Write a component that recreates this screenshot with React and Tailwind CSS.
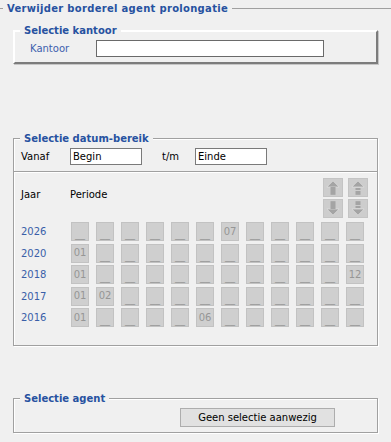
const ROWS = [
  { year: "2026", cells: { 7: "07" } },
  { year: "2020", cells: { 1: "01" } },
  { year: "2018", cells: { 1: "01", 12: "12" } },
  { year: "2017", cells: { 1: "01", 2: "02" } },
  { year: "2016", cells: { 1: "01", 6: "06" } },
];

const MONTHS = [1, 2, 3, 4, 5, 6, 7, 8, 9, 10, 11, 12];

const Legend = ({ children, className = "" }) => (
  <legend
    className={`px-[4px] leading-[13px] font-bold text-[#2752a0] bg-[#f0f0f0] ${className}`}
  >
    {children}
  </legend>
);

const Cell = ({ value }) => (
  <div className="w-[18px] h-[19px] bg-[#cfcfcf] border border-[#c2c2c2] flex items-center justify-center text-[#969696] leading-none">
    {value ?? <span className="mt-[5px]">__</span>}
  </div>
);

// grey paging arrows, disabled look
const ArrowBtn = ({ dir, split }) => (
  <div className="w-[20px] h-[19px] bg-[#cdcdcd] border border-[#c4c4c4] flex items-center justify-center">
    <svg width="14" height="15" viewBox="0 0 14 15" className={dir === "down" ? "rotate-180" : ""}>
      <path d="M7 0.8 L13.2 7 L0.8 7 Z" fill="#a4a4a4" stroke="#e2e2e2" strokeWidth="0.7" strokeLinejoin="round" />
      {split ? (
        <>
          <rect x="4.5" y="8" width="5" height="2" fill="#a4a4a4" />
          <rect x="4.5" y="11" width="5" height="3.8" fill="#a4a4a4" />
        </>
      ) : (
        <rect x="4.5" y="7" width="5" height="7.8" fill="#a4a4a4" />
      )}
    </svg>
  </div>
);

const etched = "border border-[#a0a0a0] shadow-[inset_1px_1px_0_#fff,1px_1px_0_#fff]";

export default function App() {
  return (
    <div className="w-[391px] h-[442px] overflow-hidden bg-[#f0f0f0] text-[10px] text-black font-['DejaVu_Sans',Verdana,sans-serif]">
      <fieldset className="mt-[2px] border-t border-[#a0a0a0] min-w-0">
        <Legend className="ml-[3px] tracking-[0.3px]">Verwijder borderel agent prolongatie</Legend>

        {/* kantoor */}
        <fieldset className="mt-[9px] mx-[13px] border-2 border-t-white border-l-white border-r-[#7c7c7c] border-b-[#7c7c7c] shadow-[1px_1px_0_#c6c6c6] pt-[3px] pb-[5px] min-w-0">
          <Legend className="ml-[5px]">Selectie kantoor</Legend>
          <div className="flex items-center pl-[15px]">
            <span className="w-[66px] text-[#3d5fae]">Kantoor</span>
            <div className="w-[228px] h-[17px] bg-white border border-[#6a6a6a]" />
          </div>
        </fieldset>

        {/* datum-bereik */}
        <fieldset className={`mt-[68px] mx-[13px] ${etched} pt-[3px] pb-[18px] min-w-0`}>
          <Legend className="ml-[6px]">Selectie datum-bereik</Legend>
          <div className="flex items-center pl-[7px]">
            <span className="w-[49px]">Vanaf</span>
            <div className="w-[72px] h-[17px] bg-white border border-[#7a7a7a] flex items-center pl-[2px]">Begin</div>
            <span className="ml-[20px] w-[33px]">t/m</span>
            <div className="w-[72px] h-[17px] bg-white border border-[#7a7a7a] flex items-center pl-[2px]">Einde</div>
          </div>
          <div className="mt-[6px] border-t border-[#a0a0a0] border-b border-b-white" />

          <div className="mt-[5px] flex items-start pl-[7px]">
            <span className="w-[49px] mt-[9px]">Jaar</span>
            <span className="mt-[9px]">Periode</span>
            <div className="ml-auto mr-[9px] grid grid-cols-2 gap-x-[5px] gap-y-[2px]">
              <ArrowBtn dir="up" />
              <ArrowBtn dir="up" split />
              <ArrowBtn dir="down" />
              <ArrowBtn dir="down" split />
            </div>
          </div>

          <div className="mt-[4px] flex flex-col gap-[2.5px] pl-[7px]">
            {ROWS.map((row) => (
              <div key={row.year} className="flex items-center">
                <span className="w-[50px] text-[#3a5fa8]">{row.year}</span>
                <div className="flex gap-[7px]">
                  {MONTHS.map((m) => (
                    <Cell key={m} value={row.cells[m]} />
                  ))}
                </div>
              </div>
            ))}
          </div>
        </fieldset>

        {/* agent */}
        <fieldset className={`mt-[46px] mx-[13px] ${etched} pt-[3px] pb-[5px] min-w-0`}>
          <Legend className="ml-[6px]">Selectie agent</Legend>
          <div className="pl-[166px]">
            <button className="w-[155px] h-[19px] bg-[#e1e1e1] border border-[#adadad] flex items-center justify-center">
              Geen selectie aanwezig
            </button>
          </div>
        </fieldset>
      </fieldset>
    </div>
  );
}
